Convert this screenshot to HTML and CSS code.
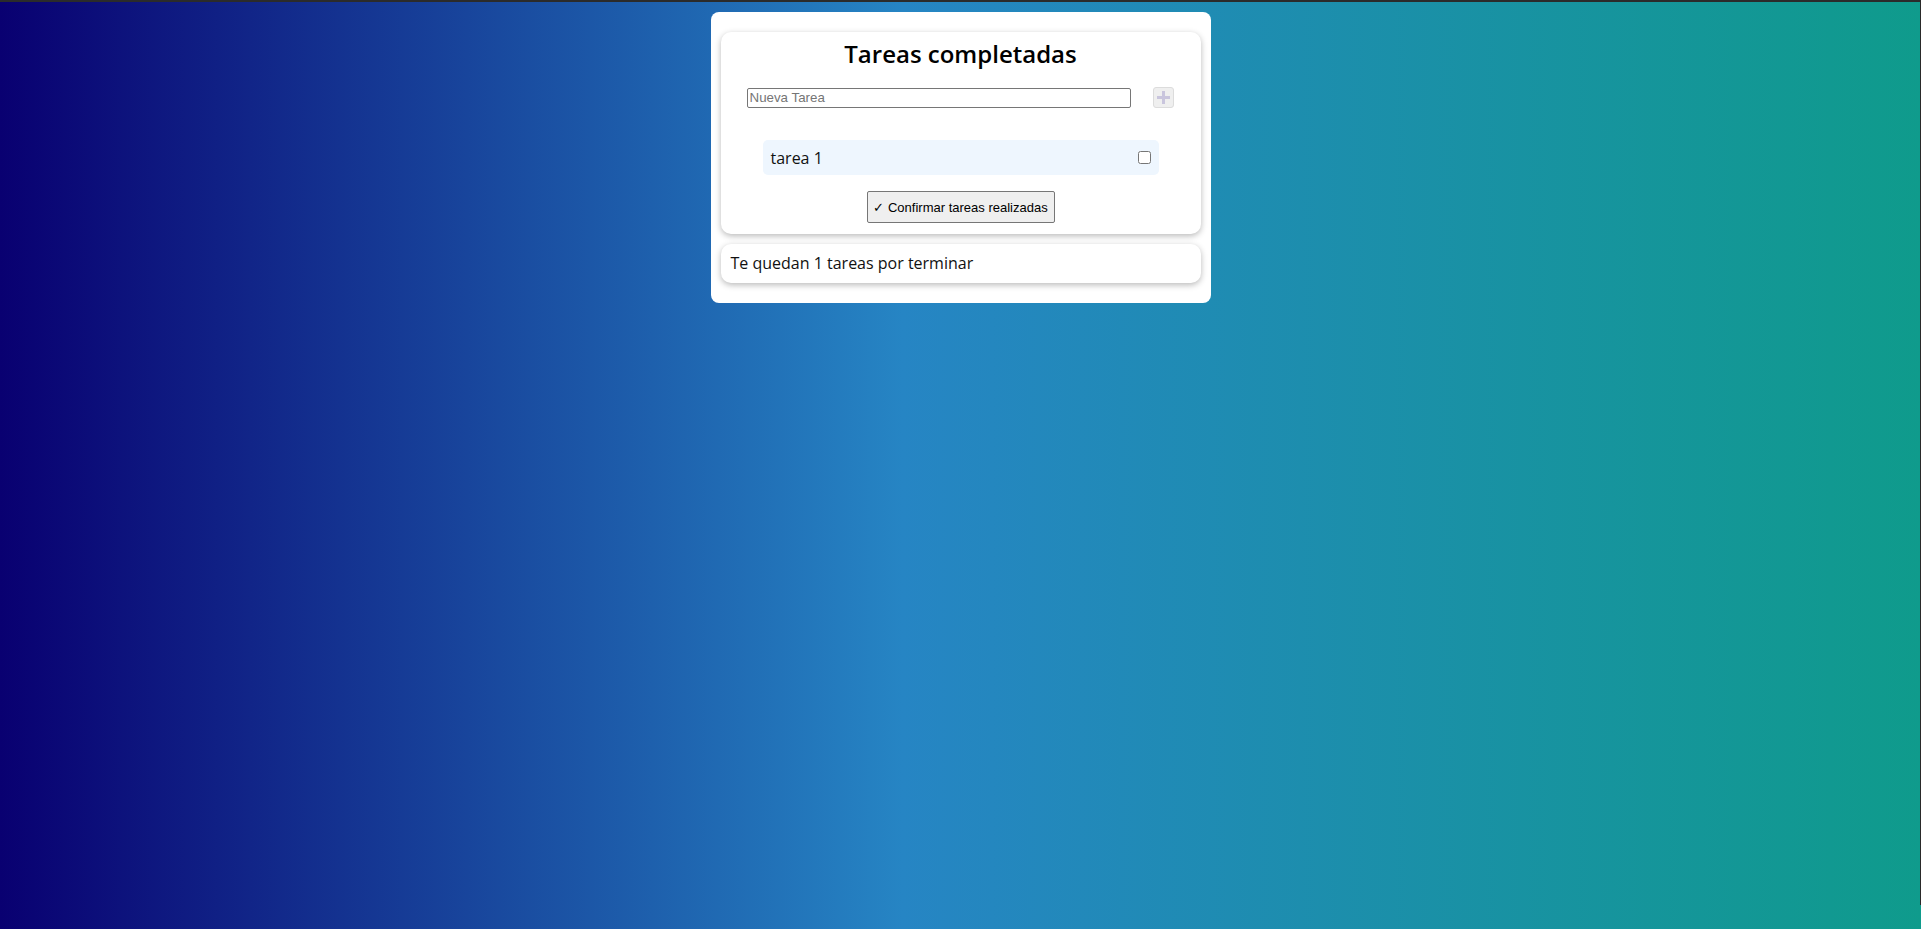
FILE: index.html
```html
<!DOCTYPE html>
<html lang="es">
<head>
<meta charset="utf-8">
<title>Tareas</title>
<link rel="stylesheet" href="styles.css">
</head>
<body>
<div class="topbar"></div>
<main class="app">
  <section class="panel">
    <h1 class="title">Tareas completadas</h1>
    <div class="add-row">
      <input class="new-task" type="text" placeholder="Nueva Tarea">
      <button class="add-btn" disabled aria-label="Agregar">
        <svg width="13" height="13" viewBox="0 0 13 13"><rect x="5" y="0" width="3" height="13" fill="#c9c5dd"/><rect x="0" y="5" width="13" height="3" fill="#c9c5dd"/></svg>
      </button>
    </div>
    <ul class="tasks">
      <li class="task"><span>tarea 1</span><input type="checkbox" class="check"></li>
    </ul>
    <div class="actions">
      <button class="confirm">✓ Confirmar tareas realizadas</button>
    </div>
  </section>
  <section class="panel footer">Te quedan 1 tareas por terminar</section>
</main>
</body>
</html>
```
FILE: styles.css
```css
html, body {
  margin: 0;
  height: 100%;
}
body {
  background: linear-gradient(to right, #090071 0%, #2685c4 47%, #0f9b8c 100%);
  font-family: "Open Sans", "Noto Sans", sans-serif;
  color: #111;
  overflow: hidden;
}
body::after {
  content: "";
  position: fixed;
  right: 0;
  top: 0;
  width: 1px;
  height: 905px;
  background: #2a2a2a;
}
.topbar {
  height: 2px;
  background: #2b2b2b;
}
.app {
  width: 480px;
  margin: 10px auto 0;
  padding: 20px 10px 20px;
  background: #fff;
  border-radius: 8px;
  display: flex;
  flex-direction: column;
  gap: 10px;
}
.panel {
  background: #fff;
  border-radius: 10px;
  box-shadow: 0 2px 6px rgba(0, 0, 0, 0.28);
}
.title {
  margin: 0;
  padding-top: 2px;
  text-align: center;
  font-size: 24px;
  font-weight: 600;
  line-height: 40px;
  color: #000;
}
.add-row {
  display: flex;
  justify-content: space-between;
  align-items: center;
  padding: 13px 27px 0 26px;
}
.new-task {
  width: 384px;
  height: 20px;
  box-sizing: border-box;
  border: 1px solid #767676;
  border-radius: 2px;
  padding: 1px 2px;
  font-family: "Liberation Sans", Arial, sans-serif;
  font-size: 13.33px;
  margin: 0;
}
.new-task::placeholder {
  color: #757575;
}
.add-btn {
  width: 21px;
  height: 21px;
  padding: 0;
  margin: 0;
  border: 1px solid #dcdcdc;
  border-radius: 3px;
  background: #efefef;
  display: flex;
  align-items: center;
  justify-content: center;
}
.tasks {
  list-style: none;
  margin: 0;
  padding: 32px 42px 0;
}
.task {
  height: 35px;
  background: #eef6fe;
  border-radius: 5px;
  display: flex;
  align-items: center;
  justify-content: space-between;
  padding: 0 8px;
  font-size: 16px;
}
.check {
  width: 13px;
  height: 13px;
  margin: 0;
}
.actions {
  display: flex;
  justify-content: center;
  padding: 16px 0 11px;
}
.confirm {
  width: 188px;
  height: 32px;
  padding: 0;
  margin: 0;
  white-space: nowrap;
  border: 1px solid #767676;
  border-radius: 2px;
  background: #efefef;
  font-family: "Liberation Sans", Arial, sans-serif;
  font-size: 13px;
  color: #000;
}
.footer {
  height: 39px;
  line-height: 39px;
  padding: 0 10px;
  font-size: 16px;
}
```
